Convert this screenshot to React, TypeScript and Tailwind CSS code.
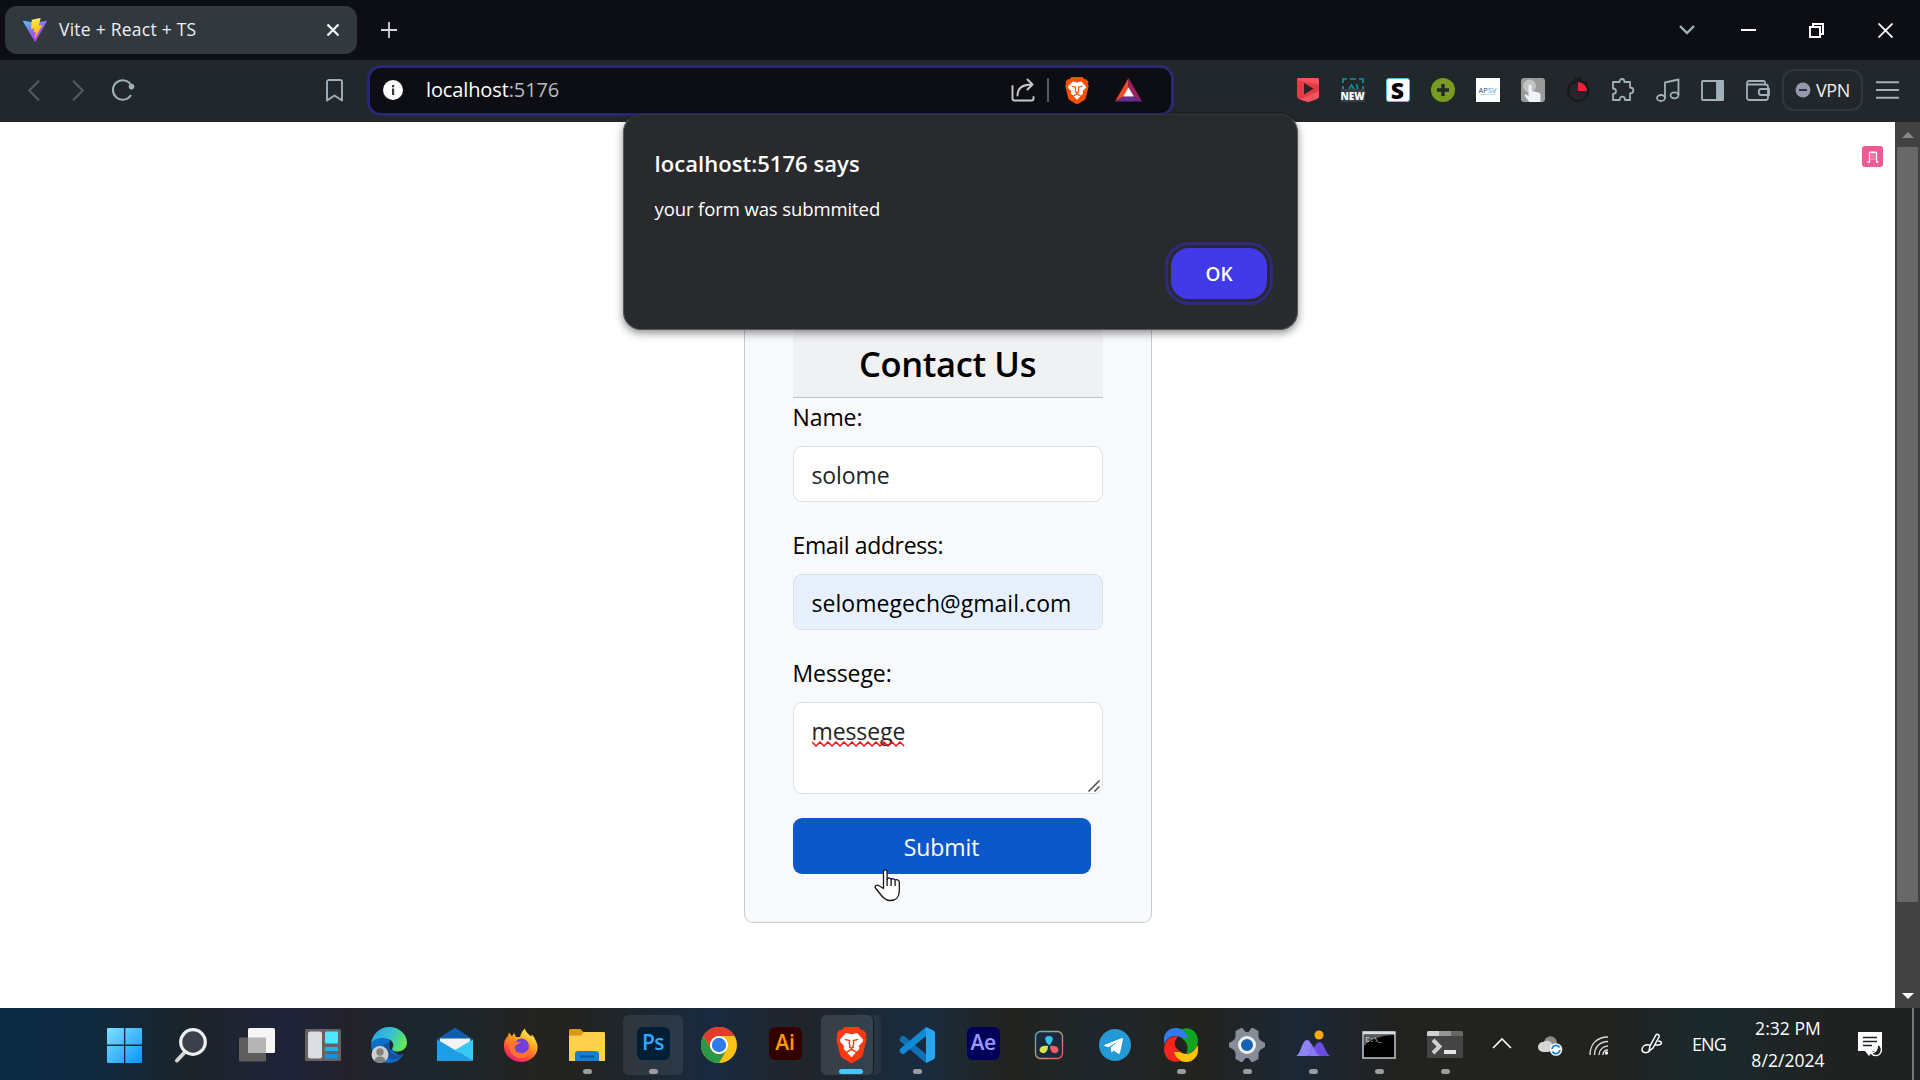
import React from "react";

type Kids = { children?: React.ReactNode };

/* ---------- Browser chrome ---------- */

function ViteLogo() {
  return (
    <svg width="24" height="24" viewBox="0 0 24 24">
      <defs>
        <linearGradient id="v1" x1="0" y1="0" x2="0.6" y2="1">
          <stop offset="0" stopColor="#41d1ff" />
          <stop offset="0.5" stopColor="#8b6cff" />
          <stop offset="1" stopColor="#bd34fe" />
        </linearGradient>
        <linearGradient id="v2" x1="0.4" y1="0" x2="0.6" y2="1">
          <stop offset="0" stopColor="#ffea83" />
          <stop offset="0.2" stopColor="#ffdd35" />
          <stop offset="1" stopColor="#ffa800" />
        </linearGradient>
      </defs>
      <path d="M23.8 3.6 12.7 23.6a.6.6 0 0 1-1.05 0L.1 3.6A.6.6 0 0 1 .8 2.7L12 4.7l11.2-2a.6.6 0 0 1 .6.9z" fill="url(#v1)" />
      <path d="M17.2.1 9 1.7a.4.4 0 0 0-.3.3l-.5 8.6c0 .2.2.4.4.4l2.3-.6c.2 0 .4.2.4.4l-.7 3.3c0 .2.2.4.4.4l1.4-.5c.3 0 .5.2.4.4l-1.1 5.3c0 .4.4.5.6.2L19 7.4c.1-.2 0-.5-.3-.5l-2.4.5a.3.3 0 0 1-.4-.4L17.6.5c0-.2-.2-.4-.4-.4z" fill="url(#v2)" />
    </svg>
  );
}

function TitleBar() {
  return (
    <div className="flex h-[60px] items-center bg-[#0d0e13] pl-[5px]">
      <div className="mt-[-1px] flex h-12 w-[352px] items-center rounded-xl bg-[#31383e] pr-[17px] pl-[18px]">
        <ViteLogo />
        <span className="ml-3 flex-1 text-[17.5px] tracking-[0.24px] text-[#eceff1]">Vite + React + TS</span>
        <svg width="14" height="14" viewBox="0 0 14 14" stroke="#fff" strokeWidth="2.2">
          <path d="M1.5 1.5l11 11M12.5 1.5l-11 11" />
        </svg>
      </div>
      <svg className="ml-6" width="16" height="16" viewBox="0 0 16 16" stroke="#d6d3dc" strokeWidth="1.8">
        <path d="M0 8h16M8 0v16" />
      </svg>
      <div className="flex-1" />
      <svg width="16" height="10" viewBox="0 0 16 10" fill="none" stroke="#a0b1ba" strokeWidth="2.4">
        <path d="M1 1l7 7 7-7" />
      </svg>
      <div className="ml-[46px] h-[2px] w-[15px] bg-white" />
      <svg className="ml-[53px]" width="15" height="15" viewBox="0 0 15 15" fill="none" stroke="#fff" strokeWidth="2">
        <path d="M1 4h10v10H1zM4 4V1h10v10h-3" />
      </svg>
      <svg className="mr-[27px] ml-[54px]" width="15" height="15" viewBox="0 0 15 15" stroke="#fff" strokeWidth="1.8">
        <path d="M.5.5l14 14M14.5.5l-14 14" />
      </svg>
    </div>
  );
}

function BraveLion({ width, height, color }: { width: number; height: number; color: string }) {
  return (
    <svg className="relative" width={width} height={height} viewBox="0 0 24 27" preserveAspectRatio="none">
      <path d="M6.5 0h11l2 2.200h1.800L23.500 5l-.6 1.900.8 2.100-2.800 11.500c-.4 1.400-1 2.100-2.200 3L12.800 27h-1.600l-5.900-3.500c-1.200-.9-1.800-1.600-2.200-3L.3 9l.8-2.100L.5 5l2.200-2.800h1.800z" fill={color} />
      <path d="M12 5.500l4.300-1 4.500 4.700c.3.800.2 1.300-.3 2l-2.800 3c.4 1 .5 1.800 0 2.700l-1.700 1.500-1.700-.9L12 16l-2.300 1.500-1.700.9-1.700-1.500c-.5-.9-.4-1.700 0-2.700l-2.800-3c-.5-.7-.6-1.200-.3-2l4.500-4.700z" fill="#fff" />
      <path d="M12 17.500l3.300 1.900L12 22.700l-3.300-3.300z" fill="#fff" />
      <path d="M6.800 9.300l3.700.9-.2 2.300.7 2.200M17.200 9.300l-3.700.9.2 2.300-.7 2.200M10 14.500l2 1.500 2-1.500" fill="none" stroke={color} strokeWidth="1.100" />
    </svg>
  );
}

function AddressBar() {
  return (
    <div className="ml-[24px] flex h-[51px] w-[807px] items-center rounded-[14px] border-[3px] border-[#2a2873] bg-[#0d0e13] pr-[29px] pl-[13px]">
      <svg width="20" height="20" viewBox="0 0 20 20">
        <circle cx="10" cy="10" r="10" fill="#fff" />
        <path d="M9 5h2.2v2.2H9zM9 8.6h2.2V15H9z" fill="#33363b" />
      </svg>
      <div className="ml-[23px] flex-1 text-[20px] tracking-[-0.12px] text-white">
        localhost<span className="text-[#b9babd]">:5176</span>
      </div>
      <svg width="24" height="24" viewBox="0 0 24 24" fill="none" stroke="#c9cacc" strokeWidth="1.9" strokeLinecap="round" strokeLinejoin="round">
        <path d="M1.5 8v12.5a2 2 0 0 0 2 2h17a2 2 0 0 0 2-2V19M6.500 17.500C6.500 10 11 6.500 21 6.500M16.500 1.500l5 5-5 5" />
      </svg>
      <div className="ml-3 h-6 w-[2px] bg-[#595a60]" />
      <div className="ml-4">
        <BraveLion width={24} height={27} color="#fb4f05" />
      </div>
      <svg className="ml-[26px]" width="27" height="24" viewBox="0 0 27 24">
        <path d="M13.500 0v9.500L8.300 18.500 0 23.500z" fill="#ff4724" />
        <path d="M13.500 0 27 23.500l-8.300-5-5.200-9z" fill="#9e1f63" />
        <path d="M0 23.500l8.300-5h10.400l8.300 5z" fill="#662d91" />
        <path d="M13.500 9.300l5.400 9.300H8.100z" fill="#fff" />
      </svg>
    </div>
  );
}

function Slot({ children }: Kids) {
  return <div className="flex h-6 w-[45px] shrink-0 items-center justify-center">{children}</div>;
}

function Extensions() {
  const line = { fill: "none", stroke: "#a0b1ba", strokeWidth: 1.8, strokeLinejoin: "round" as const };
  return (
    <>
      <Slot>
        <svg width="22" height="24" viewBox="0 0 22 24">
          <path d="M2 0h18a2 2 0 0 1 2 2v16c0 2-1 2.600-3 3.500L11 24l-8-2.500C1 20.600 0 20 0 18V2a2 2 0 0 1 2-2z" fill="#e63946" />
          <path d="M0 2l22 5V2a2 2 0 0 0-2-2H2a2 2 0 0 0-2 2z" fill="#f4525e" />
          <path d="M3 21.500L22 13v6c0 1-4 3-11 5z" fill="#f05560" />
          <path d="M7 5v11.500l9.500-5.700z" fill="#2b2326" />
        </svg>
      </Slot>
      <Slot>
        <div className="relative h-6 w-6">
          <svg className="absolute top-0 left-px" width="22" height="13" viewBox="0 0 22 13" fill="none" stroke="#0e8fa3" strokeWidth="1.700">
            <path d="M1 5V1h4M8 1h6M17 1h4v4M1 8v4M21 8v4M7 11l2.500-4 2.500 4M14 6.500q2 1 1.500 5" />
          </svg>
          <div className="absolute bottom-0 flex h-[13px] w-6 items-center justify-center bg-[#3a3d41] text-[10px] leading-none font-extrabold text-white">NEW</div>
        </div>
      </Slot>
      <Slot>
        <div className="flex h-6 w-6 items-center justify-center rounded-[3px] border border-[#4fc3e8] bg-white text-[23px] leading-none font-extrabold text-black">S</div>
      </Slot>
      <Slot>
        <svg width="24" height="24" viewBox="0 0 24 24">
          <circle cx="12" cy="12" r="12" fill="#769b20" />
          <path d="M12 6v12M6 12h12" stroke="#22272b" strokeWidth="3.400" />
        </svg>
      </Slot>
      <Slot>
        <div className="flex h-6 w-6 flex-col items-center justify-center bg-white text-[7.500px] leading-[8px] text-[#2d4f86]">
          <span>AP<span className="text-[#2f9fd8]">SV</span></span>
          <span className="h-px w-4 bg-[#c9dde9]" />
        </div>
      </Slot>
      <Slot>
        <svg width="24" height="24" viewBox="0 0 24 24">
          <rect width="24" height="24" rx="3" fill="#9b9b9b" />
          <circle cx="8.500" cy="8" r="6.500" fill="#c3c3c3" />
          <path d="M7.500 8c0-2 3-2 3 0v5l7 1.500c1.500.4 2 1.200 2 2.500v7H8.500L4 18.500c-1-1.500.8-2.500 2-1.500l1.500 1.200z" fill="#eef3fb" />
        </svg>
      </Slot>
      <Slot>
        <svg width="24" height="26" viewBox="0 0 24 26">
          <circle cx="12" cy="14" r="10" fill="none" stroke="#16191b" strokeWidth="1.800" />
          <path d="M8.500 1.500h7M12 1v3M19.500 5l2 2" stroke="#16191b" strokeWidth="2" />
          <path d="M12 5a9 9 0 0 1 9 9h-9z" fill="#f5203c" />
        </svg>
      </Slot>
      <Slot>
        <svg width="24" height="24" viewBox="0 0 24 24" {...line}>
          <path d="M2 4h6.500c0-4 5-4 5 0H19v5.500c4.500.3 4.500 5.500 0 5.800V22h-5c.3-4.500-5.500-4.500-5.300 0H2v-6c4-.5 4-5.300 0-5.500z" />
        </svg>
      </Slot>
      <Slot>
        <svg width="24" height="24" viewBox="0 0 24 24" {...line}>
          <ellipse cx="5" cy="20" rx="4" ry="3" />
          <ellipse cx="18.500" cy="17.300" rx="4" ry="3" />
          <path d="M9 20V4.500L22.500 1.500V17" />
        </svg>
      </Slot>
      <Slot>
        <svg width="23" height="21" viewBox="0 0 23 21" {...line}>
          <rect x="1" y="1" width="21" height="19" rx="1" />
          <path d="M16 1h6v19h-6z" fill="#a0b1ba" />
        </svg>
      </Slot>
      <Slot>
        <svg width="24" height="21" viewBox="0 0 24 21" {...line}>
          <path d="M19 4V2.500c0-1-.5-1.500-1.500-1.500H3C1.800 1 1 1.800 1 3v14.500c0 1.500 1 2.500 2.500 2.500h16c1.500 0 2.500-1 2.500-2.500V7c0-1.500-1-2.500-2.500-2.500H2M23 9h-8c-3 0-3 6 0 6h8z" />
        </svg>
      </Slot>
    </>
  );
}

function Toolbar() {
  return (
    <div className="flex h-[62px] items-center bg-[#22272b] pb-[2px] pl-[28px]">
      <svg width="12" height="21" viewBox="0 0 12 21" fill="none" stroke="#555d63" strokeWidth="2">
        <path d="M11 .7L1.200 10.500 11 20.300" />
      </svg>
      <svg className="ml-8" width="12" height="21" viewBox="0 0 12 21" fill="none" stroke="#555d63" strokeWidth="2">
        <path d="M1 .7l9.800 9.800L1 20.300" />
      </svg>
      <svg className="mt-[-2px] ml-[27px]" width="24" height="24" viewBox="0 0 24 24" fill="none" stroke="#a0b1ba" strokeWidth="2">
        <path d="M20.500 9A9.700 9.700 0 1 0 20 18" />
        <circle cx="20.500" cy="9.600" r="2.800" fill="#a0b1ba" stroke="none" />
      </svg>
      <svg className="mt-px ml-[191px]" width="17" height="23" viewBox="0 0 17 23" fill="none" stroke="#a0b1ba" strokeWidth="1.900" strokeLinejoin="round">
        <path d="M3 1h11a2 2 0 0 1 2 2v18.500l-7.500-5-7.500 5V3a2 2 0 0 1 2-2z" />
      </svg>
      <AddressBar />
      <div className="w-[111px]" />
      <Extensions />
      <div className="ml-[2px] flex h-[42px] w-[81px] shrink-0 items-center justify-center gap-[5px] rounded-xl border-2 border-[#30393e]">
        <svg width="16" height="16" viewBox="0 0 16 16">
          <circle cx="8" cy="8" r="7.500" fill="#9698ae" />
          <path d="M4 8h8" stroke="#22272b" strokeWidth="1.800" />
        </svg>
        <span className="text-[18px] tracking-[-0.4px] text-[#eef0f2]">VPN</span>
      </div>
      <svg className="ml-[13px]" width="23" height="18" viewBox="0 0 23 18" stroke="#a0b1ba" strokeWidth="2">
        <path d="M0 1.200h23M0 9h23M0 16.800h23" />
      </svg>
    </div>
  );
}

/* ---------- Page ---------- */

function AlertDialog() {
  return (
    <div className="absolute top-[114px] left-[623px] flex h-[216px] w-[675px] flex-col rounded-[18px] border border-[#55575a] border-t-[#343739] bg-[#292a2d] pr-[30px] pl-[30.500px] text-white shadow-[0_3px_8px_rgba(0,0,0,0.45)]">
      <h2 className="mt-[32px] text-[22px] leading-[32px] font-semibold tracking-[0.05px]">localhost:5176 says</h2>
      <p className="mt-[16px] text-[18.500px] leading-[28px] tracking-[-0.1px]">your form was submmited</p>
      <button className="mt-[25px] h-[51px] w-24 self-end rounded-[18px] bg-[#4239e8] pt-px text-[19px] font-semibold outline-[3px] outline-offset-[3px] outline-[#2f2b78]">OK</button>
    </div>
  );
}

function ContactForm() {
  return (
    <form className="mx-auto mt-[158px] h-[643px] w-[408px] rounded-[9px] border border-[#c8cacd] bg-[#f8f9fb] px-12 pt-12 text-[23px] tracking-[-0.1px] text-black">
      <h1 className="h-[69px] rounded-t-lg border-b border-[#bfc1c4] bg-[#f0f1f3] pt-[11px] text-center text-[34.500px] leading-[48px] font-semibold tracking-[-0.35px]">Contact Us</h1>
      <label className="mt-px block leading-9">Name:</label>
      <div className="mt-[11px] flex h-14 items-center rounded-[9px] border border-[#dee2e6] bg-white px-[18px] pt-[2px] text-[#212529]">solome</div>
      <label className="mt-[25px] block leading-9 tracking-[-0.36px]">Email address:</label>
      <div className="mt-[11px] flex h-14 items-center rounded-[9px] border border-[#dbe1ea] bg-[#e8f0fe] px-[18px] pt-[2px] tracking-[0.03px]">selomegech@gmail.com</div>
      <label className="mt-[25px] block leading-9">Messege:</label>
      <div className="relative mt-[11px] h-[92px] rounded-[9px] border border-[#dee2e6] bg-white px-[18px] pt-[10px] leading-9 text-[#212529]">
        messege
        <svg className="absolute top-[38px] left-[18px]" width="93" height="6" viewBox="0 0 93 6" fill="none" stroke="#f01414" strokeWidth="1.500">
          <path d="M0 1l4 4 4-4 4 4 4-4 4 4 4-4 4 4 4-4 4 4 4-4 4 4 4-4 4 4 4-4 4 4 4-4 4 4 4-4 4 4 4-4 4 4 4-4 4 4" />
        </svg>
        <svg className="absolute right-[2px] bottom-[1px]" width="12" height="12" viewBox="0 0 12 12" stroke="#4a4a4a" strokeWidth="1.500">
          <path d="M.5 11.500l11-11M6.500 11.500l5-5" />
        </svg>
      </div>
      <button type="button" className="mt-6 block h-14 w-[298px] rounded-[9px] bg-[#0b58ca] pt-[2px] text-center text-white">Submit</button>
    </form>
  );
}

function Scrollbar() {
  return (
    <div className="flex w-[25px] flex-col items-center bg-[#424242]">
      <svg className="mt-[10px]" width="12" height="6" viewBox="0 0 12 6" fill="#868686">
        <path d="M6 0l6 6H0z" />
      </svg>
      <div className="mt-[9px] h-[755px] w-[21px] bg-[#686868]" />
      <svg className="mt-auto mb-[9px]" width="12" height="6" viewBox="0 0 12 6" fill="#fff">
        <path d="M0 0h12L6 6z" />
      </svg>
    </div>
  );
}

function HandCursor() {
  return (
    <svg className="absolute top-[869px] left-[874px]" width="27" height="33" viewBox="0 0 27 33" fill="#fff" stroke="#161616" strokeWidth="1.300" strokeLinejoin="round">
      <path d="M9.500 19.500V2.500c0-2.300 3.600-2.300 3.600 0v8c.5-2 3.700-2 4 .2 1-1.500 3.800-1.200 4 .7 1-1.200 4.200-.8 4.200 1.500V22c0 6-3.500 9.500-9 9.500-4.500 0-7-2.500-9.300-5.500L1.500 19c-1.200-2 1.500-3.700 3.500-2.300z" />
      <path d="M13.100 10v7M17.100 11v6M21.100 12v5" fill="none" />
    </svg>
  );
}

/* ---------- Taskbar ---------- */

function Task({ children, running }: Kids & { running?: boolean }) {
  return (
    <div className="relative flex h-full w-[66px] shrink-0 items-center justify-center pt-[2px]">
      {children}
      {running && <div className="absolute bottom-[6px] h-[5px] w-[9px] rounded-full bg-[#9a9c9e]" />}
    </div>
  );
}

function Icon({ children }: Kids) {
  return (
    <svg className="relative" width="36" height="36" viewBox="0 0 36 36">
      {children}
    </svg>
  );
}

function TaskIcons() {
  return (
    <>
      <Task>
        <Icon>
          <defs>
            <linearGradient id="win" x1="0" y1="0" x2="1" y2="1" gradientUnits="objectBoundingBox">
              <stop offset="0" stopColor="#7fe0ff" />
              <stop offset="1" stopColor="#0a94fa" />
            </linearGradient>
          </defs>
          <path d="M1 1h16v16.500H0V2a1 1 0 0 1 1-1zM18.300 1H34a1 1 0 0 1 1 1v15.500H18.300zM0 19h17v17H1a1 1 0 0 1-1-1zM18.300 19H35v16a1 1 0 0 1-1 1H18.300z" fill="url(#win)" />
        </Icon>
      </Task>
      <Task>
        <Icon>
          <path d="M4 33.500l7.500-8" stroke="#d5d5d7" strokeWidth="4" strokeLinecap="round" />
          <circle cx="20" cy="15" r="12.300" fill="#3b414b" stroke="#f0f0f1" strokeWidth="3.200" />
        </Icon>
      </Task>
      <Task>
        <Icon>
          <rect x="0" y="10.500" width="27" height="24" rx="1.500" fill="#5e5e5f" />
          <rect x="9" y="1" width="27" height="25" rx="1.500" fill="#f5f5f5" />
          <path d="M9 10.500h17q1 0 1 1V26H10.500Q9 26 9 24.500z" fill="#b5b5b5" />
        </Icon>
      </Task>
      <Task>
        <Icon>
          <rect x="0" y="2" width="36" height="32" rx="1.500" fill="#646361" />
          <rect x="3" y="4.500" width="14" height="27" rx="2" fill="#dbdde1" />
          <rect x="20" y="4.500" width="13" height="12" rx="1" fill="#50e6ff" />
          <rect x="20" y="20" width="13" height="4" fill="#28afea" />
          <rect x="20" y="27" width="13" height="4.500" fill="#1490df" />
        </Icon>
      </Task>
      <Task>
        <Icon>
          <defs>
            <linearGradient id="ed" x1="0" y1="0.300" x2="1" y2="0.600">
              <stop offset="0" stopColor="#2ba6e0" />
              <stop offset="0.500" stopColor="#35c1d5" />
              <stop offset="1" stopColor="#66eb4a" />
            </linearGradient>
          </defs>
          <path d="M22 24c4 5 9 4 10.500 3-2 5-8 9-14.500 9C8 36 0 28 0 18c2-9 18-12 19-3-4 2-2 7 3 9z" fill="#0c6fc8" />
          <path d="M12 20c0 8 6 13 12 12.500 4-.5 7-3 8.500-5.500-6 3.500-16 .5-13.500-10-4-2-7 0-7 3z" fill="#14529f" />
          <path d="M0 17C1 7 9 0 18 0c11 0 18 8 18 15.500 0 6-5 9-9.500 9-5 0-6-2-5-3.500 3-6-3-10-10-10C6 11 2 13 0 17z" fill="url(#ed)" />
          <circle cx="9" cy="27.500" r="8.500" fill="#cfcfcd" />
          <circle cx="9" cy="25" r="3.700" fill="#83807e" />
          <path d="M3.500 34c0-6 11-6 11 0-3 2.500-8 2.500-11 0z" fill="#83807e" />
        </Icon>
      </Task>
      <Task>
        <Icon>
          <path d="M0 12.500L18 .5l18 12V20H0z" fill="#0c5dae" />
          <path d="M3 11.500h30v10L18 27 3 21.500z" fill="#f3f3f4" />
          <path d="M0 12.500l18 10.500L36 34H0z" fill="#1f9ee6" />
          <path d="M36 12.500V34L18 23z" fill="#38c8f5" />
        </Icon>
      </Task>
      <Task>
        <Icon>
          <defs>
            <linearGradient id="ff" x1="0.800" y1="0.050" x2="0.300" y2="1">
              <stop offset="0" stopColor="#fff44f" />
              <stop offset="0.400" stopColor="#ffa01e" />
              <stop offset="0.750" stopColor="#ff4a3a" />
              <stop offset="1" stopColor="#e3157d" />
            </linearGradient>
          </defs>
          <path d="M6 5.500l3 4 2-3.500 2 4h4c1-4 3-7 5-8.500.5 4 3.500 5 6 8l1-2c4 5 6 10 5.500 14-.8 8-8 13.500-16.500 13.500C9 35 1 28.500 1 18.500 1 13 3 11 5 9z" fill="url(#ff)" />
          <circle cx="18.500" cy="19" r="7.500" fill="#7540d8" />
          <path d="M6 14c5-2 7 2 12 1-2 2-5 2-6 5-.7 4 3 7 8 6 5-1 7-5 6-9 4 6-1 14-8.500 14S5 23 6 14z" fill="#ff7332" />
        </Icon>
      </Task>
      <Task running>
        <Icon>
          <path d="M0 3.500Q0 2 1.500 2h10l3 3H34.500Q36 5 36 6.500V20H0z" fill="#d99a12" />
          <path d="M0 8.500h12l3-3.500h19.500Q36 5 36 6.500V34H0z" fill="#ffd04b" />
          <path d="M6 34v-7q0-3 3-3h18q3 0 3 3v7z" fill="#1380d3" />
          <path d="M11 29.500h14" stroke="#0c5698" strokeWidth="2" />
        </Icon>
      </Task>
      <Task running>
        <div className="absolute top-[7px] h-[60px] w-[60px] rounded-md bg-white/8" />
        <div className="relative mt-[-4px] flex h-[33px] w-[33px] items-center justify-center rounded-md bg-[#001e36] text-[21px] font-semibold tracking-[-0.5px] text-[#31a8ff]">Ps</div>
      </Task>
      <Task>
        <Icon>
          <circle cx="18" cy="18" r="18" fill="#fbc116" />
          <path d="M2.400 9A18 18 0 0 1 33.600 9H18a9 9 0 0 0-8 13z" fill="#e33b2e" />
          <path d="M2.400 9l7.800 13.500A9 9 0 0 0 25.800 22.500L18 36A18 18 0 0 1 2.400 9z" fill="#2b9847" />
          <circle cx="18" cy="18" r="9" fill="#fff" />
          <circle cx="18" cy="18" r="7.200" fill="#2f7bee" />
        </Icon>
      </Task>
      <Task>
        <div className="mt-[-4px] flex h-[33px] w-[33px] items-center justify-center rounded-md bg-[#330000] text-[21px] font-semibold text-[#ff9a00]">Ai</div>
      </Task>
      <Task>
        <div className="absolute top-[7px] left-[3px] h-[60px] w-[60px] rounded-md bg-white/5" />
        <div className="absolute top-[7px] left-[3px] h-[60px] w-[53px] rounded-md border-r border-[#15181b] bg-white/7" />
        <BraveLion width={31} height={36} color="#fb3a13" />
        <div className="absolute bottom-[6px] h-[5px] w-6 rounded-full bg-[#4cc2ff]" />
      </Task>
      <Task running>
        <Icon>
          <path d="M0 12l3-3q1-.6 2.200.2L27 27v9L1 14q-1-1 0-2z" fill="#1071b5" />
          <path d="M0 24l3 3q1 .6 2.200-.2L27 9V0L1 22q-1 1 0 2z" fill="#128bd6" />
          <path d="M27 0l7.500 3.500Q36 4.300 36 6v24q0 1.700-1.500 2.500L27 36z" fill="#27a5f2" />
        </Icon>
      </Task>
      <Task>
        <div className="mt-[-4px] flex h-[33px] w-[33px] items-center justify-center rounded-md bg-[#00005b] text-[21px] font-semibold tracking-[-0.5px] text-[#9999ff]">Ae</div>
      </Task>
      <Task>
        <Icon>
          <defs>
            <linearGradient id="dv" x1="0" y1="0" x2="1" y2="1">
              <stop offset="0" stopColor="#4fb4c8" />
              <stop offset="0.500" stopColor="#c0a070" />
              <stop offset="1" stopColor="#f05060" />
            </linearGradient>
          </defs>
          <rect x="4.500" y="4.500" width="27" height="27" rx="5" fill="#1c2a3d" stroke="url(#dv)" strokeWidth="1.300" />
          <path d="M18 18.500c-5-5-5-9.500 0-9.500s5 4.500 0 9.500z" fill="#35c4f0" />
          <path d="M17 19c0 7-5 8.500-7.700 6C7 22 10 17.500 17 19z" fill="#d3e64b" />
          <path d="M19 19c0 7 5 8.500 7.700 6 2.300-3-.7-7.500-7.700-6z" fill="#f45b62" />
        </Icon>
      </Task>
      <Task>
        <Icon>
          <circle cx="18" cy="18" r="16" fill="#2399d6" />
          <path d="M7.500 18l17.500-7q1.200-.3 1 1l-3 14q-.5 1.500-1.800.8l-4.500-3.300-2.200 2.200-.8-5.200L22 14l-10.500 6.200-3.800-1.100q-1.200-.5-.2-1.100z" fill="#fff" />
        </Icon>
      </Task>
      <Task running>
        <Icon>
          <path d="M1.500 17C-1 7 5 1 13 1c6 0 11 4 12.500 10L19 11C12 7 5 9 1.500 17z" fill="#2f7cf0" />
          <path d="M18 2.500C28-2 37 7 34.500 17 33 23 28 26 23.500 26.500 26 20 24 14 17.500 10.500l7.500.5c-1-4-3.500-7-7-8.500z" fill="#11a420" />
          <path d="M34.500 18C37 28 31 35 23 35c-6 0-11-4-12.500-10l6.500 0c7 4 14 1.500 17.500-7z" fill="#ffc400" />
          <path d="M18 33.500C8 38-1 29 1.500 19 3 12 9 8.500 15 9.500c-5 5-4.500 12 3.500 15.500l-7.500 0c1 4 3.500 7 7 8.500z" fill="#f5251d" />
        </Icon>
      </Task>
      <Task running>
        <Icon>
          <path d="M12 1h1.500l3 4h3l3-4H24l5.500 3v6l1.500 3 5 3v4l-5 3-1.500 3v6L24 35h-1.500l-3-4h-3l-3 4H12l-5.500-3v-6L5 23l-5-3v-4l5-3 1.500-3V4z" fill="#858e98" />
          <circle cx="18" cy="18" r="7.500" fill="#1164b4" stroke="#eef0f2" strokeWidth="3" />
        </Icon>
      </Task>
      <Task running>
        <Icon>
          <circle cx="24" cy="8" r="4.500" fill="#ffab0a" />
          <path d="M1 29c5-2 6-16 11-16s6 14 12 16z" fill="#9184f2" />
          <path d="M12 29c5-2 8-14 12.500-14S30 26 35 29z" fill="#6a4de0" />
          <path d="M15.500 16c3 2 5 11 9.500 13H14z" fill="#8878f5" />
        </Icon>
      </Task>
      <Task running>
        <Icon>
          <rect x="2" y="5" width="32" height="26" fill="#000" stroke="#c3cad0" strokeWidth="1.500" />
          <path d="M2 4.500h32v3H2z" fill="#d7dee3" />
          <path d="M3 8h29Q12 9 3 19z" fill="#5a5a5a" />
          <text x="4.500" y="14.500" fontSize="7" fontFamily="Liberation Mono" fill="#eee">C:\_</text>
        </Icon>
      </Task>
      <Task running>
        <Icon>
          <rect x="0" y="4" width="36" height="27" rx="1.500" fill="#444445" />
          <path d="M0 9V5.500Q0 4 1.500 4H12v5z" fill="#cfcfcf" />
          <path d="M12 4h12v5H12z" fill="#969696" />
          <path d="M24 4h10.500Q36 4 36 5.500V9H24z" fill="#666" />
          <path d="M6 13l6.500 6.500-6.500 6.500" fill="none" stroke="#cfcfcf" strokeWidth="4" />
          <path d="M17 23h12v4H17z" fill="#e6e6e6" />
        </Icon>
      </Task>
    </>
  );
}

function Tray() {
  return (
    <div className="flex h-full flex-1 items-center text-white">
      <svg className="mt-[-2px] ml-[14px]" width="20" height="11" viewBox="0 0 20 11" fill="none" stroke="#fff" strokeWidth="1.600">
        <path d="M1 10l9-9 9 9" />
      </svg>
      <svg className="mt-1 ml-[26px]" width="25" height="20" viewBox="0 0 25 20">
        <circle cx="12.500" cy="6.500" r="6.300" fill="#8b8b8b" />
        <path d="M5 16a5 5 0 0 1 0-10c5-3 10 0 10 5l-4 5z" fill="#d6d6d6" />
        <circle cx="18" cy="13.500" r="6.300" fill="#fff" />
        <path d="M14 13a4 4 0 0 1 7.500-1.500M22 14a4 4 0 0 1-7.500 1.500" fill="none" stroke="#1478cf" strokeWidth="1.700" />
      </svg>
      <svg className="mt-1 ml-[26px]" width="20" height="20" viewBox="0 0 20 20" fill="none" stroke="#d8d8d8" strokeWidth="1.400">
        <path d="M1 19C1 8 8 1 19 1M5.500 19C5.500 11 11 5.500 19 5.500M10 19c0-5 4-9 9-9M14 19c0-3 2-5 5-5" />
        <circle cx="17.500" cy="17" r="1.700" fill="#fff" stroke="none" />
      </svg>
      <svg className="ml-[32px]" width="22" height="22" viewBox="0 0 22 22" fill="none" stroke="#fff" strokeWidth="1.500">
        <path d="M8 18L9 13 15 2c1-1.500 4 0 3 2l-6 11zM8.500 12C4 11 1 13.500 1 16.500c0 4 6 4 8 1M17 8c5 0 4 4 0 4h-3" />
      </svg>
      <span className="ml-[29px] w-[34px] text-[18px] tracking-[-0.9px]">ENG</span>
      <div className="mt-[-1px] ml-[22px] flex w-20 flex-col items-center text-[17.500px] leading-[32px] tracking-[0.05px] whitespace-nowrap">
        <span>2:32 PM</span>
        <span>8/2/2024</span>
      </div>
      <svg className="ml-[30px]" width="25" height="25" viewBox="0 0 25 25">
        <path d="M0 0h24v19H15l-4 5-4-5H0z" fill="#fff" />
        <path d="M5 5.500h14M5 9.500h14M5 13.500h9" stroke="#1d2224" strokeWidth="1.500" />
        <path d="M19.500 12c4 2 5 6 3 9-2 3.500-7 3.500-9.500 0 4 0 7-3 6.500-9z" fill="#1d2224" stroke="#fff" strokeWidth="1.300" />
      </svg>
      <div className="mr-[6px] ml-auto h-full w-[2px] bg-[#777a7c]" />
    </div>
  );
}

function Taskbar() {
  return (
    <div className="flex h-[72px] items-center bg-[linear-gradient(90deg,#0b2a45_0px,#0f2a41_90px,#1c242a_190px,#20233a_290px,#23222b_350px,#1b2730_430px,#24231f_540px,#22231f_570px,#192a40_710px,#20242a_800px,#192c3f_920px,#22231f_1010px,#1f262a_1090px,#22231f_1200px,#1c2836_1300px,#22221f_1400px,#22221f_1600px,#1a292d_1710px,#202221_1830px,#1f2122_1920px)] pl-[92px]">
      <TaskIcons />
      <Tray />
    </div>
  );
}

export default function App() {
  return (
    <div className="relative flex h-[1080px] w-[1920px] flex-col overflow-hidden bg-white font-['Open_Sans',sans-serif]">
      <TitleBar />
      <Toolbar />
      <div className="flex flex-1">
        <main className="relative flex flex-1 items-start bg-white">
          <ContactForm />
          <div className="absolute top-6 right-3 flex h-[21px] w-[21px] items-center justify-center rounded-[3px] bg-[#ee5a94]">
            <svg width="12" height="12" viewBox="0 0 12 12" fill="none" stroke="#fff" strokeWidth="1.300">
              <path d="M.5 11h2V1.500h7V11h2M4.500.5L6 2 7.500.5" />
              <path d="M4 5h4M4 8h4" strokeOpacity=".4" />
            </svg>
          </div>
        </main>
        <Scrollbar />
      </div>
      <Taskbar />
      <AlertDialog />
      <HandCursor />
    </div>
  );
}
